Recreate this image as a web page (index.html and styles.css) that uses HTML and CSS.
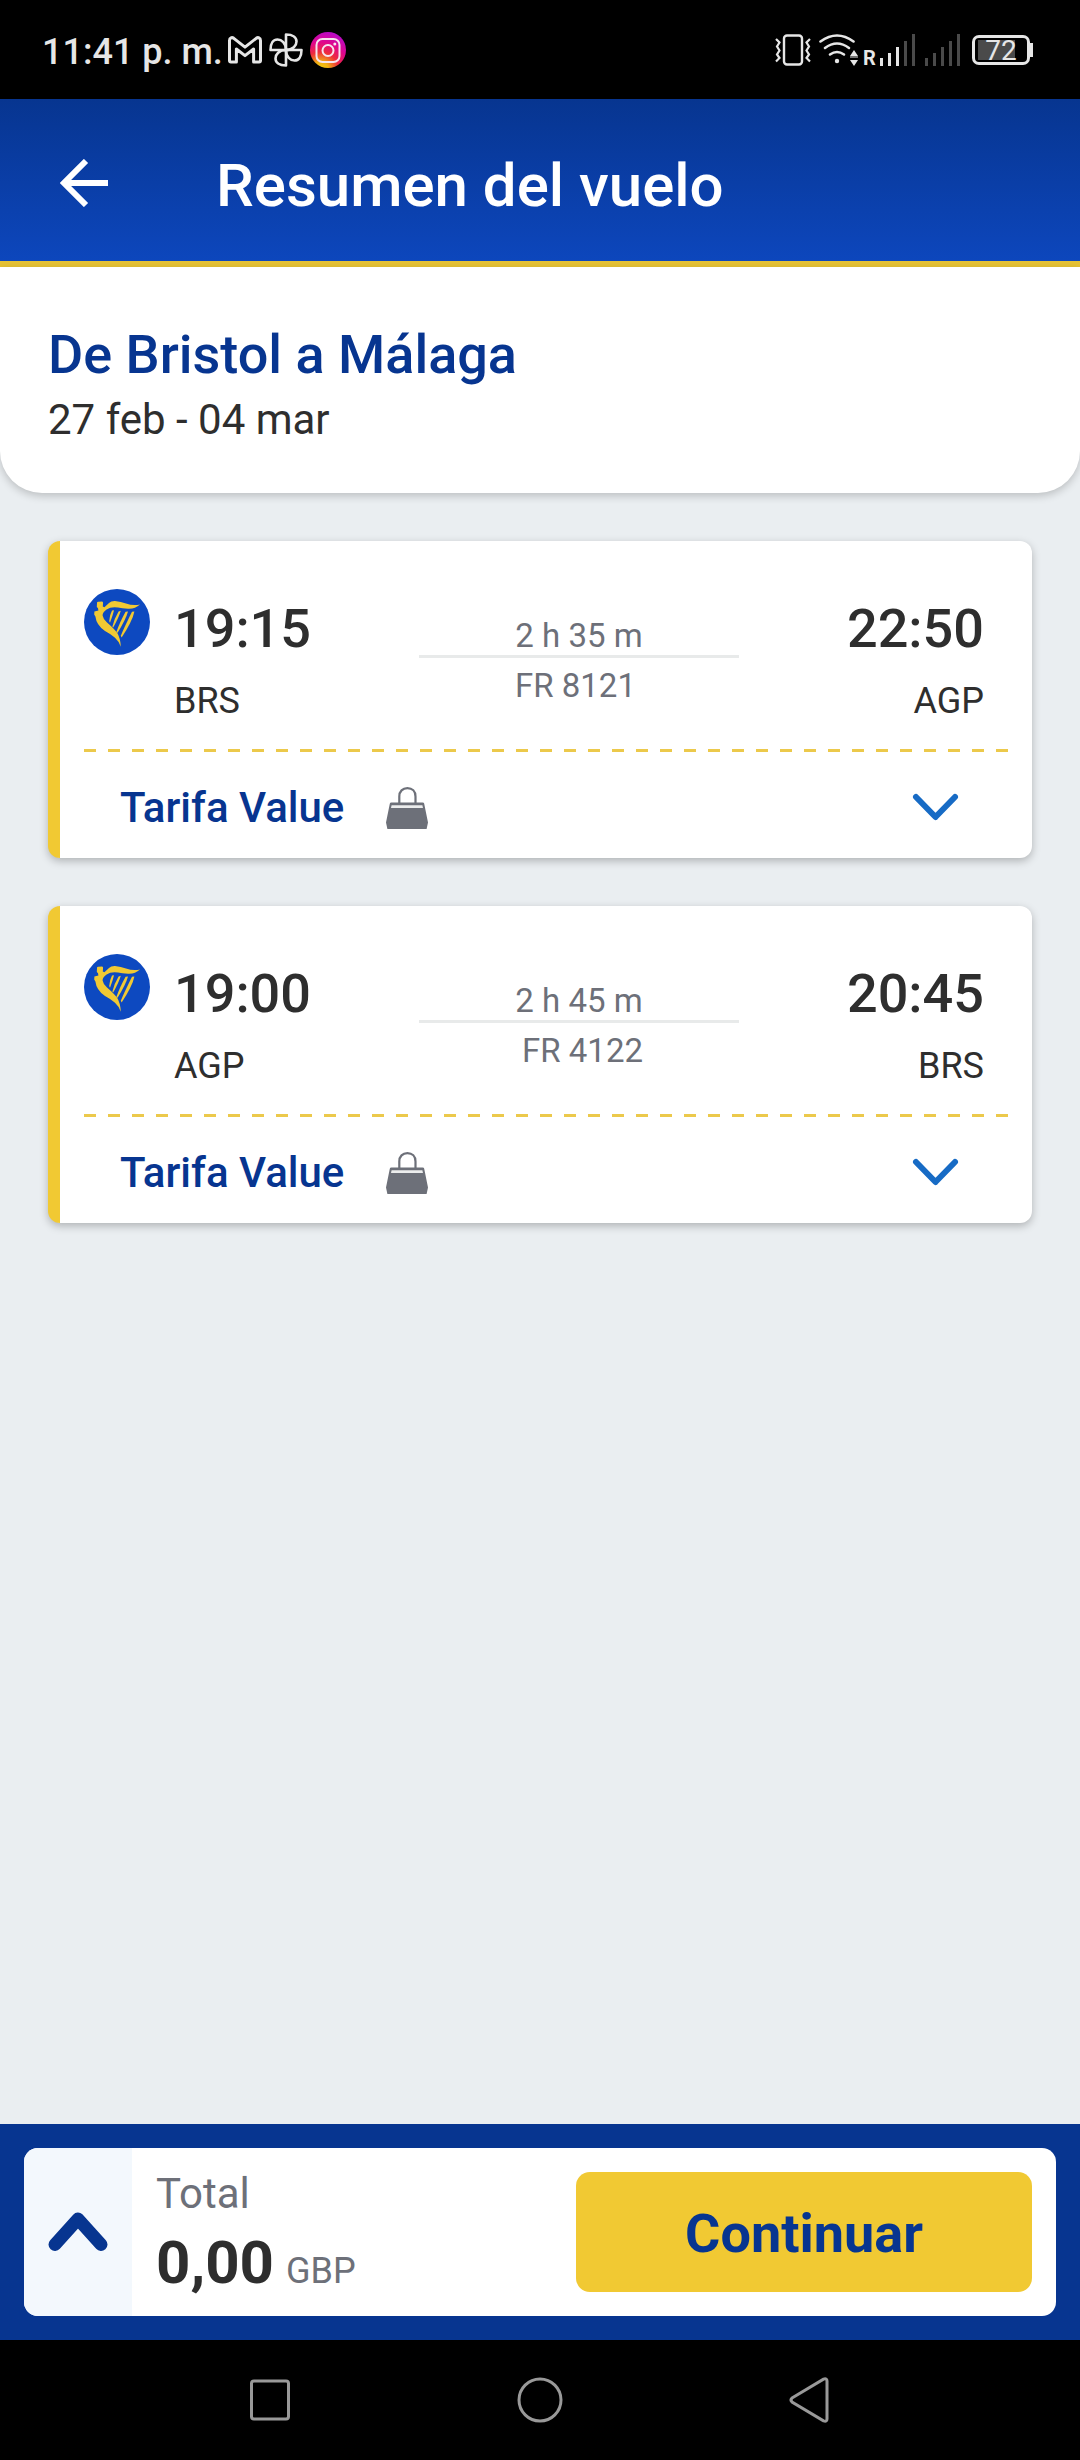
FILE: index.html
```html
<!DOCTYPE html>
<html lang="es">
<head>
  <meta charset="UTF-8">
  <meta name="viewport" content="width=device-width, initial-scale=1">
  <title>Resumen del vuelo</title>
  <link rel="stylesheet" href="styles.css">
</head>
<body>
  <!-- shared icons -->
  <svg class="sprite" aria-hidden="true">
    <symbol id="harp" viewBox="0 0 66 66">
      <circle cx="33" cy="33" r="33" fill="#0d49c0"/>
      <g fill="#f1c933">
        <path d="M13 14 Q13 12.6 14.4 12.8 L18 12.6 Q19.4 12.8 19 14.4 L18.8 17.6 L20.4 18.2 L25 14 Q27 11.8 31 11.9 Q37 12.6 42 14.6 Q49 17 56 15.6 Q51 20.2 44 19.8 Q38 19.4 34 18.6 Q27 17.6 22.6 20.4 Q18.4 23.4 18.6 26.6 Q19 30 23 33.4 Q30 39.4 33 43.6 Q36.4 49 36.8 57.8 Q35 52.4 31 48.8 Q26 44.6 21 42 Q12.4 36 11.4 27.4 L10.2 25.6 L10.4 22.6 L14.4 21.4 L14 19.2 L12.8 18 Z"/>
        <path d="M28 21.6 L30 21.2 Q28.6 27 26 33.8 L25.2 32 Q25.8 25.6 28 21.6 Z"/>
        <path d="M34.6 22.4 L36.8 21.8 Q35 28 29.2 38.6 L28.4 37.4 Q30 30 34.6 22.4 Z"/>
        <path d="M41.6 22.8 L44 22.4 Q42 30 33.4 44 L32.6 42.6 Q35.4 34 41.6 22.8 Z"/>
        <path d="M48 22.8 L50.4 22.4 Q48.6 31.6 37.6 48.6 L36.8 46.8 Q40.4 38 48 22.8 Z"/>
      </g>
    </symbol>
    <symbol id="bag" viewBox="0 0 42 42">
      <path d="M13.3 17V9.4C13.3 4.4 16.6 1.1 21.4 1.1S29.5 4.4 29.5 9.4V17" fill="none" stroke="#6d7079" stroke-width="2.2"/>
      <path d="M5.4 15.5H36.6Q38 15.5 38.2 16.8L42 35.6 40.6 42H1.4L0 35.6 3.8 16.8Q4 15.5 5.4 15.5Z" fill="#6d7079"/>
      <path d="M5.6 18.2H36.4L37 21H5Z" fill="#eceded"/>
    </symbol>
    <symbol id="chevron" viewBox="0 0 48 48">
      <path d="M4 13 23.5 33 43 13" fill="none" stroke="#176bc5" stroke-width="6" stroke-linecap="round" stroke-linejoin="round"/>
    </symbol>
  </svg>

  <div class="status-bar">
    <div class="status-left">
      <span class="clock">11:41 p. m.</span>
      <svg class="gmail" viewBox="0 0 34 28" width="34" height="28">
        <path d="M1.5 4.6C1.5 1.6 4 1 5.8 2.3L17 11.2 28.2 2.3C30 1 32.5 1.6 32.5 4.6V24.6Q32.5 26 31.1 26H25.6V13L17 19.6 8.4 13V26H2.9Q1.5 26 1.5 24.6Z" fill="none" stroke="#e6e6e6" stroke-width="3" stroke-linejoin="round"/>
      </svg>
      <svg class="pinwheel" viewBox="0 0 34 34" width="34" height="34">
        <g fill="none" stroke="#e6e6e6" stroke-width="2.6" stroke-linejoin="round">
          <path d="M17 17H1.5C1.5 10 4.5 6.5 8.5 6.5S17 10 17 17Z"/>
          <path d="M17 17H1.5C1.5 10 4.5 6.5 8.5 6.5S17 10 17 17Z" transform="rotate(90 17 17)"/>
          <path d="M17 17H1.5C1.5 10 4.5 6.5 8.5 6.5S17 10 17 17Z" transform="rotate(180 17 17)"/>
          <path d="M17 17H1.5C1.5 10 4.5 6.5 8.5 6.5S17 10 17 17Z" transform="rotate(270 17 17)"/>
        </g>
      </svg>
      <svg viewBox="0 0 36 36" width="36" height="36">
        <defs>
          <radialGradient id="insta" cx="0.3" cy="1.05" r="1.1">
            <stop offset="0" stop-color="#f5cf10"/>
            <stop offset="0.2" stop-color="#f0b012"/>
            <stop offset="0.45" stop-color="#ee2c3c"/>
            <stop offset="0.7" stop-color="#e0068c"/>
            <stop offset="1" stop-color="#b40ccc"/>
          </radialGradient>
        </defs>
        <circle cx="18" cy="18" r="18" fill="url(#insta)"/>
        <g fill="none" stroke="#f6e4ee" stroke-width="2">
          <rect x="6.5" y="7" width="23" height="23" rx="6"/>
          <circle cx="18" cy="18.5" r="5.5"/>
        </g>
        <circle cx="24.8" cy="12" r="1.5" fill="#f6e4ee"/>
      </svg>
    </div>
    <div class="status-right">
      <svg class="vibrate" viewBox="0 0 36 32" width="36" height="32">
        <rect x="9" y="1.5" width="18" height="29" rx="3" fill="none" stroke="#e6e6e6" stroke-width="2.4"/>
        <path d="M1 5 4.5 8.5 2 12.5 4.5 16.5 2 20.5 4.5 24 1 27.5M35 5 31.5 8.5 34 12.5 31.5 16.5 34 20.5 31.5 24 35 27.5" fill="none" stroke="#e6e6e6" stroke-width="2.2"/>
      </svg>
      <svg class="wifi" viewBox="0 0 40 32" width="40" height="32">
        <g fill="none" stroke="#e6e6e6" stroke-width="2.6" stroke-linecap="round">
          <path d="M1.5 7.5Q18 -4.5 34.5 7.5"/>
          <path d="M6 14Q18 5 30 14"/>
          <path d="M11 20.5Q18 15.5 25 20.5"/>
        </g>
        <circle cx="18" cy="27" r="2.2" fill="#e6e6e6"/>
        <path d="M31 22 35 16 39 22ZM31 26H39L35 32ZM31 22.6H39V23.4H31Z" fill="#e6e6e6"/>
      </svg>
      <span class="roaming">R</span>
      <svg class="signal" viewBox="0 0 36 32" width="36" height="32">
        <path d="M1 24h3v8H1zM9 19h3v13H9zM17 13h3v19h-3z" fill="#e6e6e6"/>
        <path d="M25 7h3v25h-3zM33 0h3v32h-3z" fill="#4a4a4a"/>
      </svg>
      <svg class="signal" viewBox="0 0 36 32" width="36" height="32">
        <path d="M1 24h3v8H1zM9 19h3v13H9zM17 13h3v19h-3zM25 7h3v25h-3zM33 0h3v32h-3z" fill="#4a4a4a"/>
      </svg>
      <span class="battery">72</span>
    </div>
  </div>

  <header class="app-header">
    <button type="button" class="back-btn" aria-label="Volver">
      <svg viewBox="0 0 48 48" width="48" height="48">
        <path d="M48 24H4M26 2 4 24 26 46" fill="none" stroke="#fff" stroke-width="6"/>
      </svg>
    </button>
    <h1>Resumen del vuelo</h1>
  </header>

  <section class="route">
    <h2>De Bristol a Málaga</h2>
    <p>27 feb - 04 mar</p>
  </section>

  <main class="flights">
    <article class="card">
      <div class="flight">
        <svg class="logo"><use href="#harp"/></svg>
        <div class="legs">
          <div class="stop">
            <time>19:15</time>
            <span>BRS</span>
          </div>
          <div class="info">
            <div class="duration">2 h 35 m</div>
            <div class="number">FR 8121</div>
          </div>
          <div class="stop arrival">
            <time>22:50</time>
            <span>AGP</span>
          </div>
        </div>
      </div>
      <div class="dashes"></div>
      <button type="button" class="fare" aria-expanded="false">
        <span>Tarifa Value</span>
        <svg class="bag"><use href="#bag"/></svg>
        <svg class="chevron"><use href="#chevron"/></svg>
      </button>
    </article>

    <article class="card">
      <div class="flight">
        <svg class="logo"><use href="#harp"/></svg>
        <div class="legs">
          <div class="stop">
            <time>19:00</time>
            <span>AGP</span>
          </div>
          <div class="info return">
            <div class="duration">2 h 45 m</div>
            <div class="number">FR 4122</div>
          </div>
          <div class="stop arrival">
            <time>20:45</time>
            <span>BRS</span>
          </div>
        </div>
      </div>
      <div class="dashes"></div>
      <button type="button" class="fare" aria-expanded="false">
        <span>Tarifa Value</span>
        <svg class="bag"><use href="#bag"/></svg>
        <svg class="chevron"><use href="#chevron"/></svg>
      </button>
    </article>
  </main>

  <footer class="checkout">
    <div class="checkout-box">
      <button type="button" class="expand-btn" aria-label="Ver detalles">
        <svg viewBox="0 0 60 42" width="60" height="42">
          <path d="M7 33.5 30 8 53 33.5" fill="none" stroke="#073590" stroke-width="13" stroke-linecap="round" stroke-linejoin="round"/>
        </svg>
      </button>
      <div class="total">
        <div class="total-label">Total</div>
        <div class="total-price"><strong>0,00</strong><span>GBP</span></div>
      </div>
      <button type="button" class="continue-btn">Continuar</button>
    </div>
  </footer>

  <nav class="nav-bar">
    <button type="button" aria-label="Recientes">
      <svg viewBox="0 0 48 48" width="48" height="48"><rect x="5.5" y="5" width="37" height="38" rx="2.5" fill="none" stroke="#999" stroke-width="3"/></svg>
    </button>
    <button type="button" aria-label="Inicio">
      <svg viewBox="0 0 48 48" width="48" height="48"><circle cx="24" cy="24" r="21" fill="none" stroke="#999" stroke-width="3"/></svg>
    </button>
    <button type="button" aria-label="Atrás">
      <svg viewBox="0 0 48 48" width="48" height="48"><path d="M6 22 37.5 3.2Q41 2 41 5V43Q41 46 37.5 44.8L6 26Q4 24 6 22Z" fill="none" stroke="#999" stroke-width="3"/></svg>
    </button>
  </nav>
</body>
</html>
```

FILE: styles.css
```css
* {
  box-sizing: border-box;
}
body {
  margin: 0;
  min-height: 100vh;
  display: flex;
  flex-direction: column;
  background: #eaeef1;
  color: #2e2e2e;
  font-family: Roboto, "Liberation Sans", sans-serif;
}
h1, h2, p {
  margin: 0;
  font-weight: 500;
}
button {
  padding: 0;
  border: none;
  background: none;
  font-family: inherit;
  cursor: pointer;
}
svg {
  display: block;
  flex-shrink: 0;
}
.sprite {
  position: absolute;
  width: 0;
  height: 0;
}

/* status bar */
.status-bar {
  height: 99px;
  padding: 0 50px 0 42px;
  display: flex;
  justify-content: space-between;
  align-items: center;
  background: #000;
  color: #e6e6e6;
}
.status-left,
.status-right {
  display: flex;
  align-items: center;
}
.status-left {
  gap: 7px;
}
.clock {
  margin-top: 4px;
  font-size: 36px;
  font-weight: 500;
  line-height: 42px;
}
.gmail {
  margin-left: -2px;
}
.wifi {
  margin-left: 8px;
}
.roaming {
  width: 20px;
  padding: 16px 0 0 4px;
  font-size: 20px;
  font-weight: 700;
  line-height: 18px;
}
.signal + .signal {
  margin-left: 9px;
}
.battery {
  width: 58px;
  height: 30px;
  margin-left: 12px;
  border: 3px solid #e6e6e6;
  border-radius: 7px;
  background: linear-gradient(#4a4a4a, #4a4a4a) 3px 2px / 37px 20px no-repeat;
  font-size: 28px;
  line-height: 25px;
  text-align: center;
  position: relative;
}
.battery::after {
  content: "";
  position: absolute;
  right: -6px;
  top: 5px;
  width: 3px;
  height: 14px;
  background: #e6e6e6;
}

/* header */
.app-header {
  min-height: 168px;
  padding: 0 60px;
  display: flex;
  align-items: center;
  gap: 108px;
  background: linear-gradient(#073590, #0d47be);
  box-shadow: inset 0 -6px #e6c235;
  color: #fff;
}
.app-header h1 {
  padding-top: 5px;
  font-size: 60px;
  line-height: 70px;
}
.route {
  padding: 56px 48px 48px;
  background: #fff;
  border-radius: 0 0 42px 42px;
  box-shadow: 0 3px 9px rgba(0,0,0,0.2);
}
.route h2 {
  margin-bottom: 8px;
  font-size: 54px;
  line-height: 64px;
  color: #073590;
}
.route p {
  font-size: 42px;
  font-weight: 400;
  line-height: 50px;
}

/* flight cards */
.flights {
  flex: 1;
  padding: 48px;
  display: flex;
  flex-direction: column;
  gap: 48px;
}
.card {
  background: #fff;
  border-left: 12px solid #f1c933;
  border-radius: 12px;
  box-shadow: 0 3px 8px rgba(0,0,0,0.25);
}
.flight {
  padding: 48px 48px 27px 24px;
  display: flex;
  align-items: flex-start;
  gap: 24px;
}
.logo {
  width: 66px;
  height: 66px;
}
.legs {
  flex: 1;
  padding-top: 8px;
  display: grid;
  grid-template-columns: 1fr 320px 1fr;
}
.stop {
  display: flex;
  flex-direction: column;
  gap: 19px;
}
.stop time {
  font-size: 54px;
  font-weight: 500;
  line-height: 64px;
}
.stop span {
  font-size: 36px;
  line-height: 42px;
}
.arrival {
  text-align: right;
}
.info {
  padding-top: 20px;
  color: #6d7079;
  font-size: 33px;
  line-height: 38px;
}
.duration {
  border-bottom: 3px solid #e8eaea;
  text-align: center;
}
/* the number lines up with one edge of the duration text */
.number {
  width: 128px;
  margin: 9px auto 0;
}
.return .number {
  text-align: right;
}
.dashes {
  height: 3px;
  margin: 0 24px;
  background: repeating-linear-gradient(90deg, #ecc94b 0 12px, transparent 12px 24px);
}
.fare {
  width: 100%;
  padding: 31px 72px 25px 60px;
  display: flex;
  align-items: center;
  color: #073590;
  font-size: 42px;
  font-weight: 500;
  line-height: 50px;
}
.bag {
  width: 42px;
  height: 42px;
  margin-left: 42px;
}
.chevron {
  width: 48px;
  height: 48px;
  margin-left: auto;
}

/* bottom bar */
.checkout {
  padding: 24px;
  background: #073590;
}
.checkout-box {
  min-height: 168px;
  display: flex;
  background: #fff;
  border-radius: 14px;
  overflow: hidden;
}
.expand-btn {
  width: 108px;
  display: flex;
  justify-content: center;
  align-items: center;
  background: #f3f8fd;
}
.total {
  flex: 1;
  padding: 21px 24px 0;
}
.total-label {
  color: #6d7079;
  font-size: 42px;
  line-height: 50px;
}
.total-price {
  margin-top: 9px;
  display: flex;
  align-items: baseline;
  gap: 12px;
  line-height: 70px;
}
.total-price strong {
  font-size: 60px;
  font-weight: 700;
}
.total-price span {
  color: #6d7079;
  font-size: 36px;
}
.continue-btn {
  width: 456px;
  margin: 24px;
  padding-top: 3px;
  border-radius: 14px;
  background: #f1c933;
  color: #073590;
  font-size: 54px;
  font-weight: 700;
}
.nav-bar {
  height: 120px;
  display: flex;
  justify-content: center;
  background: #000;
}
.nav-bar button {
  width: 25%;
  display: flex;
  justify-content: center;
  align-items: center;
}
```
